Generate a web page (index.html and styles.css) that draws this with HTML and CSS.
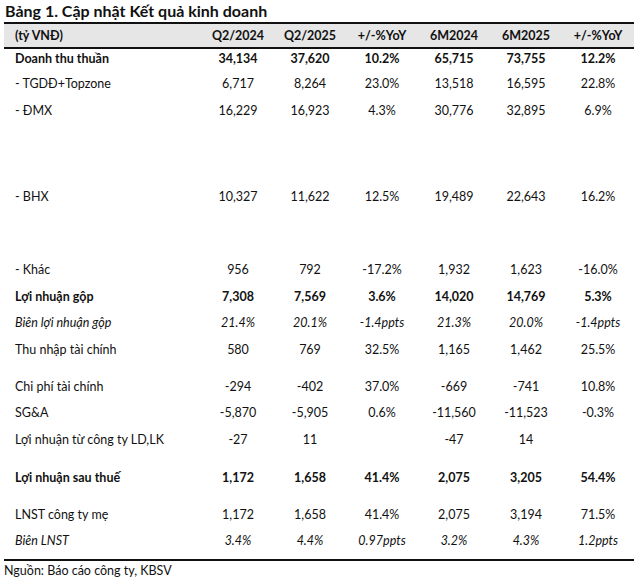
FILE: index.html
```html
<!DOCTYPE html>
<html lang="vi">
<head>
<meta charset="utf-8">
<title>Bảng 1</title>
<link rel="stylesheet" href="styles.css">
</head>
<body>
<div class="page">
  <h1 class="title">Bảng 1. Cập nhật Kết quả kinh doanh</h1>
  <div class="table">
    <div class="row head">
      <div class="label">(tỷ VNĐ)</div><div>Q2/2024</div><div>Q2/2025</div><div>+/-%YoY</div><div>6M2024</div><div>6M2025</div><div>+/-%YoY</div>
    </div>
    <div class="row bold h25">
      <div class="label">Doanh thu thuần</div><div>34,134</div><div>37,620</div><div>10.2%</div><div>65,715</div><div>73,755</div><div>12.2%</div>
    </div>
    <div class="row h27">
      <div class="label">- TGDĐ+Topzone</div><div>6,717</div><div>8,264</div><div>23.0%</div><div>13,518</div><div>16,595</div><div>22.8%</div>
    </div>
    <div class="row h86">
      <div class="label">- ĐMX</div><div>16,229</div><div>16,923</div><div>4.3%</div><div>30,776</div><div>32,895</div><div>6.9%</div>
    </div>
    <div class="row h73">
      <div class="label">- BHX</div><div>10,327</div><div>11,622</div><div>12.5%</div><div>19,489</div><div>22,643</div><div>16.2%</div>
    </div>
    <div class="row h27">
      <div class="label">- Khác</div><div>956</div><div>792</div><div>-17.2%</div><div>1,932</div><div>1,623</div><div>-16.0%</div>
    </div>
    <div class="row bold h26">
      <div class="label">Lợi nhuận gộp</div><div>7,308</div><div>7,569</div><div>3.6%</div><div>14,020</div><div>14,769</div><div>5.3%</div>
    </div>
    <div class="row italic h27">
      <div class="label">Biên lợi nhuận gộp</div><div>21.4%</div><div>20.1%</div><div>-1.4ppts</div><div>21.3%</div><div>20.0%</div><div>-1.4ppts</div>
    </div>
    <div class="row h37">
      <div class="label">Thu nhập tài chính</div><div>580</div><div>769</div><div>32.5%</div><div>1,165</div><div>1,462</div><div>25.5%</div>
    </div>
    <div class="row h26">
      <div class="label">Chi phí tài chính</div><div>-294</div><div>-402</div><div>37.0%</div><div>-669</div><div>-741</div><div>10.8%</div>
    </div>
    <div class="row h27">
      <div class="label">SG&amp;A</div><div>-5,870</div><div>-5,905</div><div>0.6%</div><div>-11,560</div><div>-11,523</div><div>-0.3%</div>
    </div>
    <div class="row h38">
      <div class="label">Lợi nhuận từ công ty LD,LK</div><div>-27</div><div>11</div><div></div><div>-47</div><div>14</div><div></div>
    </div>
    <div class="row bold h37">
      <div class="label">Lợi nhuận sau thuế</div><div>1,172</div><div>1,658</div><div>41.4%</div><div>2,075</div><div>3,205</div><div>54.4%</div>
    </div>
    <div class="row h26">
      <div class="label">LNST công ty mẹ</div><div>1,172</div><div>1,658</div><div>41.4%</div><div>2,075</div><div>3,194</div><div>71.5%</div>
    </div>
    <div class="row italic h28">
      <div class="label">Biên LNST</div><div>3.4%</div><div>4.4%</div><div>0.97ppts</div><div>3.2%</div><div>4.3%</div><div>1.2ppts</div>
    </div>
  </div>
  <p class="source">Nguồn: Báo cáo công ty, KBSV</p>
</div>
</body>
</html>
```
FILE: styles.css
```css
* { box-sizing: border-box; }
html, body { margin: 0; padding: 0; background: #fff; }
body {
  font-family: Lato, "Noto Sans", sans-serif;
  color: #111;
  font-size: 12.5px;
}
.page { padding: 0 3px 0 4px; }
.title {
  margin: 0;
  height: 22px;
  line-height: 22px;
  font-size: 16px;
  font-weight: 700;
  padding-left: 1px;
}
.table { width: 630px; border-bottom: 2px solid #111; }
.row {
  display: grid;
  grid-template-columns: 198px repeat(6, 72px);
  align-items: start;
  line-height: 20px;
}
.row > div { text-align: center; white-space: nowrap; }
.row > .label { text-align: left; padding-left: 11px; }
.head {
  background: #e6e6e6;
  border-top: 2px solid #111;
  border-bottom: 2px solid #111;
  height: 27px;
  align-items: center;
  font-weight: 700;
}
.bold { font-weight: 700; }
.italic { font-style: italic; }
.h25 { height: 25px; }
.h26 { height: 26px; }
.h27 { height: 27px; }
.h28 { height: 28px; }
.h37 { height: 37px; }
.h38 { height: 38px; }
.h73 { height: 73px; }
.h86 { height: 86px; }
.source {
  margin: 0;
  line-height: 20px;
  height: 20px;
  font-size: 12.5px;
}
```
